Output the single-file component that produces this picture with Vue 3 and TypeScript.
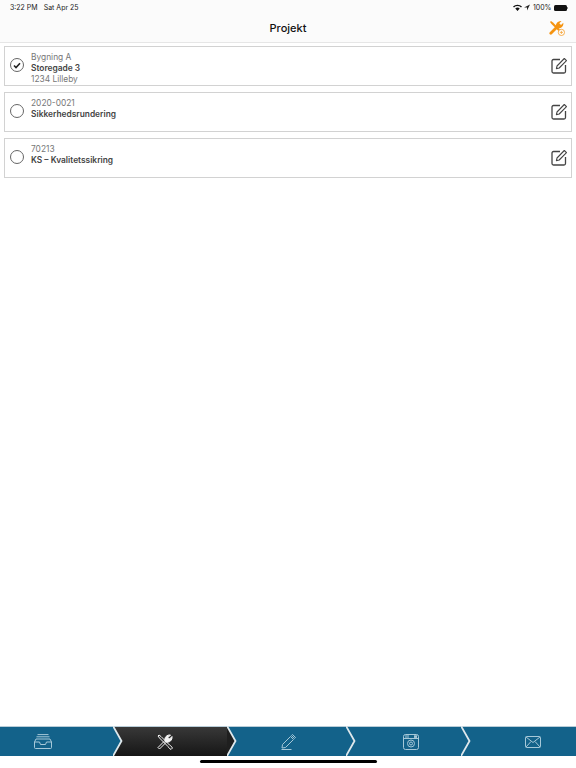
<script setup lang="ts">
    interface Project {
        lines: string[]
        checked: boolean
    }

    // second line of every row is the bold one
    const projects: Project[] = [
        { lines: ['Bygning A', 'Storegade 3', '1234 Lilleby'], checked: true },
        { lines: ['2020-0021', 'Sikkerhedsrundering'], checked: false },
        { lines: ['70213', 'KS – Kvalitetssikring'], checked: false },
    ]

    const tabs = [
        { id: 'inbox', width: 113, inset: 34 },
        { id: 'tools', width: 114, inset: 44 },
        { id: 'edit', width: 119, inset: 54 },
        { id: 'camera', width: 115, inset: 57 },
        { id: 'mail', width: 115, inset: 64 },
    ]
</script>

<template>
    <div class="screen">
        <div class="status">
            <span class="clock"><span>3:22 PM</span><span>Sat Apr 25</span></span>
            <div class="status-right">
                <svg width="9" height="7" viewBox="0 0 18 14">
                    <path d="M0 5a13 13 0 0 1 18 0l-2 2a10 10 0 0 0-14 0zM4.500 9a7 7 0 0 1 9 0L9 14z" fill="#111" />
                </svg>
                <svg width="6" height="7" viewBox="0 0 12 14">
                    <path d="M12 1 0 7h6v6z" fill="#222" />
                </svg>
                <span>100%</span>
                <div class="battery"><i></i></div>
            </div>
        </div>

        <header class="nav">
            <h1>Projekt</h1>
            <svg class="nav-icon" width="16" height="16" viewBox="0 0 16 16" fill="none">
                <path d="M1 2 2 1l2 1.500 7.500 7.500-1.500 1.500-7.500-7.500z" fill="#f5930f" />
                <path d="M1.800 13.200 7.500 7.500" stroke="#f5930f" stroke-width="2.800" stroke-linecap="round" />
                <path d="M7 8C6 4.500 8.500 .500 12.500 1L10.300 3.300l1.700 1.700 2.300-2.200C15 7 11 9.500 7 8z" fill="#f5930f" />
                <circle cx="12.400" cy="12.400" r="3.100" fill="#fff" stroke="#f5a53a" stroke-width=".9" />
                <path d="M12.400 10.800v3.200M10.800 12.400h3.200" stroke="#f5a53a" stroke-width=".8" />
            </svg>
        </header>

        <main class="list">
            <div v-for="p in projects" :key="p.lines[0]" class="row">
                <div class="radio">
                    <svg v-if="p.checked" width="8" height="7" viewBox="0 0 8 7" fill="none">
                        <path d="M1 3.500l2 2L7 1.200" stroke="#222" stroke-width="1.600" />
                    </svg>
                </div>
                <div class="text">
                    <div v-for="(line, i) in p.lines" :key="i" :class="{ b: i === 1 }">{{ line }}</div>
                </div>
                <svg class="edit" width="17" height="17" viewBox="0 0 17 17" fill="none" stroke="#444">
                    <path d="M9 2.500H2.500A1.500 1.500 0 0 0 1 4v10.500A1.500 1.500 0 0 0 2.500 16H13a1.500 1.500 0 0 0 1.500-1.500V8" stroke-width="1.300" />
                    <path d="M6 9 13.300 1.500l2.200 2.200L8.200 11l-2.800.600z" stroke-width="1.100" stroke-linejoin="round" />
                </svg>
            </div>
        </main>

        <nav class="tabbar">
            <div
                v-for="(t, i) in tabs"
                :key="t.id"
                :class="['tab', { active: t.id === 'tools' }]"
                :style="{ width: t.width + 'px', paddingLeft: t.inset + 'px' }"
            >
                <svg v-if="t.id === 'inbox'" class="ico" width="18" height="15" viewBox="0 0 18 15">
                    <path d="M3.500 .600h11M2.500 2.800h13M2 5h14l1.500 3v5.500a1 1 0 0 1-1 1h-15a1 1 0 0 1-1-1V8zM.500 8h5l1 2.500h5l1-2.500h5" />
                </svg>
                <svg v-else-if="t.id === 'tools'" class="ico tools" width="16" height="16" viewBox="0 0 16 16">
                    <path d="M1 2 2 1l2 1.500 8.500 8.500 1 .500L15.500 14 14 15.500 11.500 13.500 11 12.500 2.500 4z" />
                    <path d="M1 13.500 7 7.500l1.500 1.500-6 6z" />
                    <path d="M8 7C7 3.500 10 .500 13.500 1L11 3.500 12.500 5 15 2.500C15.500 6 12.500 9 9 8z" fill="#f4f4f4" />
                </svg>
                <svg v-else-if="t.id === 'edit'" class="ico" width="15" height="16" viewBox="0 0 15 16">
                    <path d="M1.500 10.500 9.500 2.500l3 3-8 8-3.500.500zM10.500 1.500l1-1 3 3-1 1zM.500 15.500h10" />
                </svg>
                <svg v-else-if="t.id === 'camera'" class="ico" width="16" height="16" viewBox="0 0 16 16">
                    <rect x=".500" y=".500" width="15" height="15" rx="2" />
                    <path d="M.500 4.500h15M3 .500v4M5 .500v4" />
                    <circle cx="8" cy="9.500" r="3.500" />
                    <circle cx="8" cy="9.500" r="1.500" />
                    <rect x="11.500" y="1.800" width="2" height="1.600" />
                </svg>
                <svg v-else class="ico" width="16" height="12" viewBox="0 0 16 12">
                    <rect x=".500" y=".500" width="15" height="11" rx="1" />
                    <path d="M1 1l7 5.500L15 1M1 11l5-5.500M15 11l-5-5.500" />
                </svg>
                <svg v-if="i < tabs.length - 1" class="chevron" width="10" height="30" viewBox="0 0 10 30">
                    <path class="wedge" d="M0 0 8.500 15 0 30z" />
                    <path class="line" d="M0 0 8.500 15 0 30" />
                </svg>
            </div>
        </nav>

        <div class="home-bar"></div>
    </div>
</template>

<style>
    body {
        background: #fff;
    }
</style>

<style scoped>
    .screen {
        width: 576px;
        height: 768px;
        display: flex;
        flex-direction: column;
        background: #fff;
        font-family: Inter, 'Liberation Sans', sans-serif;
        overflow: hidden;
    }
    .status {
        height: 13px;
        padding: 1px 9px 0 10px;
        display: flex;
        justify-content: space-between;
        align-items: center;
        font-size: 7px;
        color: #222;
        background: #fbfbfb;
    }
    .clock {
        display: flex;
        gap: 6px;
    }
    .status-right {
        display: flex;
        align-items: center;
        gap: 2.500px;
    }
    .battery {
        width: 13px;
        height: 6px;
        background: #111;
        border-radius: 1.500px;
        position: relative;
    }
    .battery i {
        position: absolute;
        left: 100%;
        top: 2px;
        width: 1px;
        height: 2px;
        background: #888;
    }
    .nav {
        height: 28px;
        display: flex;
        align-items: center;
        justify-content: center;
        position: relative;
        background: #fbfbfb;
        border-bottom: 1px solid #e6e6e6;
        margin-bottom: 3px;
    }
    .nav h1 {
        margin: 0;
        font-size: 11px;
        font-weight: 500;
        color: #111;
    }
    .nav-icon {
        position: absolute;
        right: 11px;
        top: 6px;
    }
    .list {
        flex: 1;
        padding: 0 4px;
        display: flex;
        flex-direction: column;
        gap: 6px;
    }
    .row {
        height: 40px;
        box-sizing: border-box;
        border: 1px solid #d2d2d2;
        display: flex;
        align-items: center;
        padding: 0 3px 2px 5px;
    }
    .radio {
        width: 14px;
        height: 14px;
        box-sizing: border-box;
        border: 1px solid #666;
        border-radius: 50%;
        display: flex;
        align-items: center;
        justify-content: center;
        margin-right: 7px;
        flex: none;
    }
    .text {
        flex: 1;
        align-self: flex-start;
        padding-top: 5px;
        font-size: 8.400px;
        line-height: 11px;
        color: #777;
    }
    .text .b {
        font-weight: 600;
        color: #444;
    }
    .tabbar {
        height: 30px;
        display: flex;
        background: #13628a;
        border-top: 1px solid #b9cdd8;
        box-sizing: border-box;
    }
    .tab {
        position: relative;
        display: flex;
        align-items: center;
        box-sizing: border-box;
        flex: none;
    }
    .tab.active {
        background: linear-gradient(#383838, #161616);
    }
    .ico {
        fill: none;
        stroke: #a6c8d8;
        stroke-width: 1;
    }
    .ico.tools {
        stroke: #f4f4f4;
        stroke-width: 1;
    }
    .chevron {
        position: absolute;
        left: 100%;
        top: -1px;
        z-index: 1;
    }
    .wedge {
        fill: #13628a;
    }
    .tab.active .wedge {
        fill: #1f1f1f;
    }
    .line {
        fill: none;
        stroke: #dfe8ec;
        stroke-width: 1.800;
    }
    .home-bar {
        width: 177px;
        height: 3px;
        border-radius: 2px;
        background: #000;
        margin: 4px auto 5px;
    }
</style>
